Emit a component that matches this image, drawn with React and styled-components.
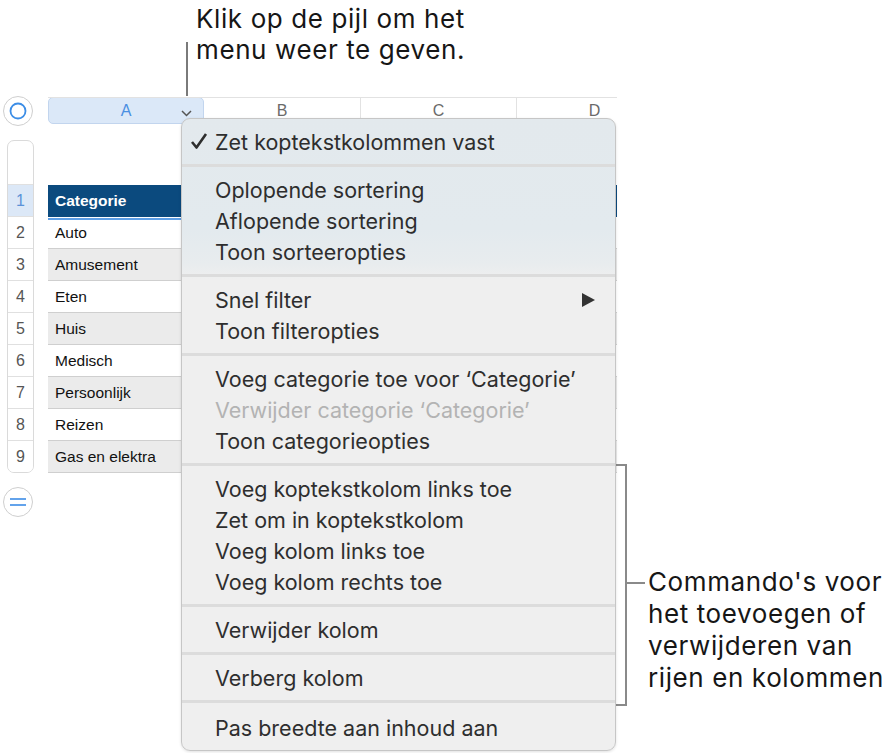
import React from 'react';
import styled, { createGlobalStyle } from 'styled-components';

const GlobalStyle = createGlobalStyle`
  body {
    margin: 0;
    background: #fff;
    font-family: 'Inter', 'Liberation Sans', sans-serif;
  }
`;

const Page = styled.div`
  position: relative;
  width: 894px;
  height: 753px;
  overflow: hidden;
  background: #fff;
`;

const TopCallout = styled.div`
  padding: 3px 0 0 196px;
  height: 91px;
  font-size: 26px;
  letter-spacing: 0.6px;
  line-height: 31px;
  color: #161616;
`;

const Leader = styled.div`
  position: absolute;
  left: 186px;
  top: 42px;
  width: 2px;
  height: 54px;
  background: #7a7a7a;
`;

const Sheet = styled.div`
  display: flex;
  flex-direction: column;
  margin-top: 3px;
`;

const HeaderRow = styled.div`
  display: flex;
  align-items: center;
  height: 27px;
`;

const Gutter = styled.div`
  width: 48px;
  display: flex;
  justify-content: flex-start;
  padding-left: 3px;
  box-sizing: border-box;
`;

const RoundButton = styled.div`
  width: 30px;
  height: 30px;
  border-radius: 50%;
  border: 1px solid #cfcfcf;
  background: #fff;
  box-sizing: border-box;
  display: flex;
  align-items: center;
  justify-content: center;
`;

const ColHeaders = styled.div`
  display: grid;
  grid-template-columns: 156px 157px 156px 156px;
  width: 569px;
  height: 27px;
  overflow: hidden;
  border-top: 1px solid #e2e2e2;
  box-sizing: border-box;
`;

const ColHeader = styled.div`
  display: flex;
  align-items: center;
  justify-content: center;
  position: relative;
  font-family: 'Liberation Sans', sans-serif;
  font-size: 16px;
  color: ${(p) => (p.$active ? '#4a8fe2' : '#6a6a6a')};
  background: ${(p) => (p.$active ? '#dbe8f8' : '#fff')};
  border: ${(p) => (p.$active ? '1px solid #c2d5ee' : 'none')};
  border-radius: ${(p) => (p.$active ? '5px' : '0')};
  border-right: ${(p) => (p.$active ? '1px solid #c2d5ee' : '1px solid #e2e2e2')};
  margin-top: ${(p) => (p.$active ? '-1px' : '0')};
  box-sizing: border-box;
`;

const Chevron = styled.svg`
  position: absolute;
  right: 11px;
  top: 12px;
`;

const Body = styled.div`
  display: flex;
  align-items: flex-start;
`;

const LeftRail = styled.div`
  width: 48px;
  display: flex;
  flex-direction: column;
  align-items: flex-start;
`;

const RowHeaders = styled.div`
  margin: 16px 0 0 7px;
  width: 25px;
  border: 1px solid #dadada;
  border-radius: 7px;
  overflow: hidden;
  background: #fff;
`;

const RowHeaderTop = styled.div`
  height: 43px;
`;

const RowNum = styled.div`
  height: 32px;
  border-top: 1px solid #e0e0e0;
  box-sizing: border-box;
  display: flex;
  align-items: center;
  justify-content: center;
  font-family: 'Liberation Sans', sans-serif;
  font-size: 16px;
  color: ${(p) => (p.$active ? '#5b92d8' : '#555')};
  background: ${(p) => (p.$active ? '#dce8f7' : '#fff')};
`;

const AddButton = styled(RoundButton)`
  margin: 14px 0 0 3px;
`;

const Grid = styled.div`
  margin-top: 61px;
  width: 569px;
  overflow: hidden;
  display: grid;
  grid-template-columns: 156px 157px 156px 156px;
`;

const Cell = styled.div`
  height: 32px;
  box-sizing: border-box;
  padding-left: 7px;
  display: flex;
  align-items: center;
  font-family: 'Liberation Sans', sans-serif;
  font-size: 15.5px;
  color: #111;
  border-right: 1px solid #cfcfcf;
  border-bottom: 1px solid #cfcfcf;
  background: ${(p) => (p.$head ? '#0b4a7e' : p.$shade ? '#ebebeb' : '#fff')};
  ${(p) =>
    p.$head &&
    `
    color: #fff;
    font-weight: bold;
    border-color: #0b4a7e;
  `}
  ${(p) =>
    p.$selected &&
    `
    position: relative;
    box-shadow: 0 0 0 1px #fff, 0 0 0 3px #5e9fe6;
    z-index: 1;
  `}
`;

const Menu = styled.div`
  position: absolute;
  left: 181px;
  top: 118px;
  width: 435px;
  height: 633px;
  box-sizing: border-box;
  border: 1px solid #c6c6c6;
  border-radius: 9px;
  background: linear-gradient(180deg, #e3e9ed 0px, #e3eaee 110px, #e8ecee 145px, #efefef 160px, #efefef 100%);
  box-shadow: 0 1px 3px rgba(0, 0, 0, 0.12);
  overflow: hidden;
  z-index: 5;
`;

const Section = styled.div`
  padding: 7px 0 7px;
  & + & {
    border-top: 3px solid #dcdcdc;
  }
  &:last-child {
    padding-top: 9px;
  }
`;

const Item = styled.div`
  position: relative;
  height: 31px;
  display: flex;
  align-items: center;
  padding-left: 33px;
  font-size: 21.5px;
  color: ${(p) => (p.$disabled ? '#b3b3b3' : '#2e2e2e')};
`;

const Check = styled.svg`
  position: absolute;
  left: 8px;
  top: 6px;
`;

const Arrow = styled.svg`
  position: absolute;
  right: 20px;
  top: 9px;
`;

const Bracket = styled.div`
  position: absolute;
  left: 616px;
  top: 464px;
  width: 9px;
  height: 238px;
  border: 2px solid #8a8a8a;
  border-left: none;

  &::after {
    content: '';
    position: absolute;
    left: 9px;
    top: 116px;
    width: 20px;
    height: 2px;
    background: #8a8a8a;
  }
`;

const SideCallout = styled.div`
  position: absolute;
  left: 648px;
  top: 566px;
  font-size: 26px;
  letter-spacing: 0.6px;
  line-height: 32px;
  color: #161616;
  white-space: nowrap;
`;

const rows = ['Auto', 'Amusement', 'Eten', 'Huis', 'Medisch', 'Persoonlijk', 'Reizen', 'Gas en elektra'];

const sections = [
  [{ label: 'Zet koptekstkolommen vast', checked: true }],
  [{ label: 'Oplopende sortering' }, { label: 'Aflopende sortering' }, { label: 'Toon sorteeropties' }],
  [{ label: 'Snel filter', sub: true }, { label: 'Toon filteropties' }],
  [
    { label: 'Voeg categorie toe voor ‘Categorie’' },
    { label: 'Verwijder categorie ‘Categorie’', disabled: true },
    { label: 'Toon categorieopties' },
  ],
  [
    { label: 'Voeg koptekstkolom links toe' },
    { label: 'Zet om in koptekstkolom' },
    { label: 'Voeg kolom links toe' },
    { label: 'Voeg kolom rechts toe' },
  ],
  [{ label: 'Verwijder kolom' }],
  [{ label: 'Verberg kolom' }],
  [{ label: 'Pas breedte aan inhoud aan' }],
];

export default function App() {
  return (
    <Page>
      <GlobalStyle />
      <TopCallout>
        Klik op de pijl om het
        <br />
        menu weer te geven.
      </TopCallout>
      <Leader />

      <Sheet>
        <HeaderRow>
          <Gutter>
            <RoundButton>
              <svg width="18" height="18" viewBox="0 0 18 18">
                <circle cx="9" cy="9" r="7.5" fill="none" stroke="#3c8de6" strokeWidth="1.8" />
              </svg>
            </RoundButton>
          </Gutter>
          <ColHeaders>
            <ColHeader $active>
              A
              <Chevron width="11" height="7" viewBox="0 0 11 7">
                <polyline points="1,1 5.5,5.5 10,1" fill="none" stroke="#555" strokeWidth="1.5" />
              </Chevron>
            </ColHeader>
            <ColHeader>B</ColHeader>
            <ColHeader>C</ColHeader>
            <ColHeader>D</ColHeader>
          </ColHeaders>
        </HeaderRow>

        <Body>
          <LeftRail>
            <RowHeaders>
              <RowHeaderTop />
              {[1, 2, 3, 4, 5, 6, 7, 8, 9].map((n) => (
                <RowNum key={n} $active={n === 1}>
                  {n}
                </RowNum>
              ))}
            </RowHeaders>
            <AddButton>
              <svg width="18" height="10" viewBox="0 0 18 10">
                <line x1="1" y1="2" x2="17" y2="2" stroke="#3c8de6" strokeWidth="1.6" />
                <line x1="1" y1="8" x2="17" y2="8" stroke="#3c8de6" strokeWidth="1.6" />
              </svg>
            </AddButton>
          </LeftRail>

          <Grid>
            <Cell $head $selected>Categorie</Cell>
            <Cell $head />
            <Cell $head />
            <Cell $head />
            {rows.map((r, i) => (
              <React.Fragment key={r}>
                <Cell $shade={i % 2 === 1}>{r}</Cell>
                <Cell $shade={i % 2 === 1} />
                <Cell $shade={i % 2 === 1} />
                <Cell $shade={i % 2 === 1} />
              </React.Fragment>
            ))}
          </Grid>
        </Body>
      </Sheet>

      <Menu>
        {sections.map((items, si) => (
          <Section key={si}>
            {items.map((it) => (
              <Item key={it.label} $disabled={it.disabled}>
                {it.checked && (
                  <Check width="18" height="18" viewBox="0 0 18 18">
                    <polyline points="2,10 6.5,15.5 16,2" fill="none" stroke="#2e2e2e" strokeWidth="2.6" strokeLinejoin="round" />
                  </Check>
                )}
                {it.label}
                {it.sub && (
                  <Arrow width="13" height="14" viewBox="0 0 13 14">
                    <polygon points="0,0 13,7 0,14" fill="#333" />
                  </Arrow>
                )}
              </Item>
            ))}
          </Section>
        ))}
      </Menu>

      <Bracket />
      <SideCallout>
        Commando's voor
        <br />
        het toevoegen of
        <br />
        verwijderen van
        <br />
        rijen en kolommen
      </SideCallout>
    </Page>
  );
}
